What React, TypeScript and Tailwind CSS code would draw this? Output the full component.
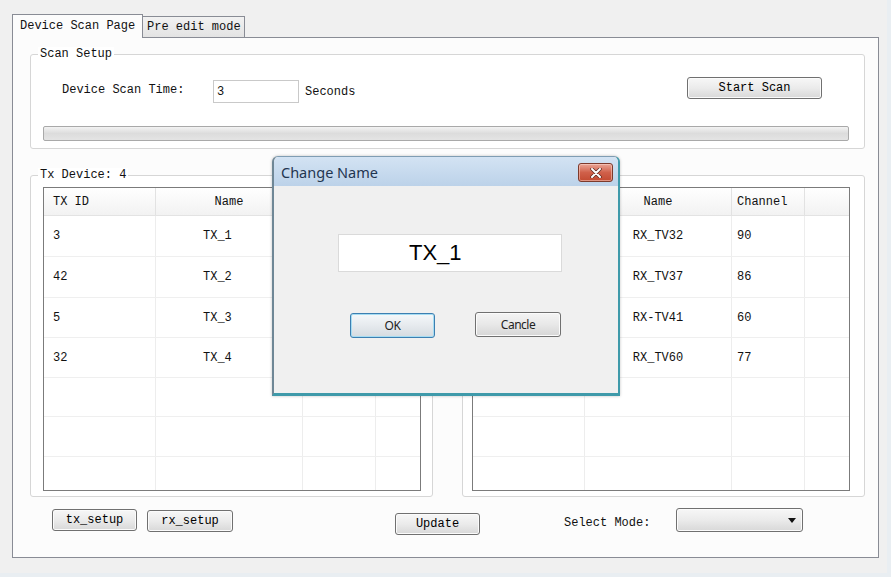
import React from "react";

const btn =
  "flex items-center justify-center rounded-[3px] border border-[#707070] bg-linear-to-b from-[#f7f7f7] via-[#ebebeb] to-[#d8d8d8] shadow-[inset_0_0_0_1px_#fbfbfb] text-[12px] leading-none text-black";

const rowHeights = [41, 41, 40, 40, 39, 40, 40];

function DataTable({
  kind,
  headers,
  rows,
}: {
  kind: "tx" | "rx";
  headers: string[];
  rows: string[][];
}) {
  const allRows: string[][] = [...rows];
  while (allRows.length < rowHeights.length) allRows.push(["", "", "", ""]);
  return (
    <div
      className={
        kind === "tx"
          ? "ml-[12px] mt-[11px] h-[304px] w-[378px] overflow-hidden border border-[#7b7b7b] bg-white"
          : "ml-[9px] mt-[11px] h-[304px] w-[378px] overflow-hidden border border-[#7b7b7b] bg-white"
      }
    >
      <div className="flex h-[28px] border-b border-[#e3e3e3] bg-linear-to-b from-white to-[#f2f2f2]">
        <div className="flex w-[112px] items-center border-r border-[#e2e2e2] pl-[9px]">{headers[0]}</div>
        <div className="flex w-[147px] items-center justify-center border-r border-[#e2e2e2]">{headers[1]}</div>
        <div className="flex w-[73px] items-center border-r border-[#e2e2e2] pl-[5px]">{headers[2]}</div>
        <div className="flex-1" />
      </div>
      {allRows.map((r, i) => (
        <div
          key={i}
          className="flex border-b border-[#efefef]"
          style={{ height: rowHeights[i] }}
        >
          <div className="flex w-[112px] items-center border-r border-[#ededed] pl-[9px]">{r[0]}</div>
          {kind === "tx" ? (
            <div className="flex w-[147px] items-center border-r border-[#ededed] pl-[47px]">{r[1]}</div>
          ) : (
            <div className="flex w-[147px] items-center justify-center border-r border-[#ededed]">{r[1]}</div>
          )}
          <div className="flex w-[73px] items-center border-r border-[#ededed] pl-[5px]">{r[2]}</div>
          <div className="flex-1" />
        </div>
      ))}
    </div>
  );
}

function GroupBox({ label, children }: { label: string; children: React.ReactNode }) {
  return (
    <div className="relative h-[322px] w-[403px] rounded-[3px] border border-[#d6d6d6] bg-white">
      <div className="absolute -top-[8px] left-[7px] bg-white px-[2px] text-[12px] leading-[14px]">{label}</div>
      {children}
    </div>
  );
}

export default function App() {
  return (
    <div className="relative h-[577px] w-[891px] overflow-hidden border-r-[4px] border-b-[4px] border-[#e9eef2] bg-[#f0f0f0] pl-[12px] pt-[14px] font-['Liberation_Mono',monospace] text-[12px] text-[#111]">
      {/* Tabs */}
      <div className="flex h-[23px] items-end">
        <div className="relative z-10 -mb-[1px] h-[24px] w-[131px] border border-b-0 border-[#898c95] bg-[#fcfcfc] pl-[7px] pt-[4px] leading-[14px]">
          Device Scan Page
        </div>
        <div className="h-[21px] w-[102px] border border-b-0 border-l-0 border-[#898c95] bg-linear-to-b from-[#f2f2f2] to-[#e3e3e3] pl-[4px] pt-[3px] leading-[14px]">
          Pre edit mode
        </div>
      </div>

      {/* Tab panel */}
      <div className="flex h-[521px] w-[867px] flex-col border border-[#898c95] bg-[#fcfcfc] pl-[17px] pt-[16px]">
        {/* Scan Setup */}
        <div className="relative h-[95px] w-[835px] rounded-[3px] border border-[#d6d6d6] bg-white pt-[22px]">
          <div className="absolute -top-[8px] left-[7px] bg-white px-[2px] leading-[14px]">Scan Setup</div>
          <div className="flex h-[26px] items-start">
            <div className="ml-[31px] mt-[6px] w-[151px] leading-[14px]">Device Scan Time:</div>
            <div className="mt-[3px] flex h-[23px] w-[86px] items-center border border-[#c9c9c9] bg-white pl-[3px]">3</div>
            <div className="ml-[6px] mt-[8px] leading-[14px]">Seconds</div>
            <div className={`${btn} ml-auto mr-[42px] h-[22px] w-[135px]`}>Start Scan</div>
          </div>
          <div className="ml-[12px] mr-[15px] mt-[23px] h-[15px] rounded-[2px] border border-[#a9a9a9] bg-linear-to-b from-[#f3f3f3] via-[#dcdcdc] to-[#e4e4e4]" />
        </div>

        {/* Device groups */}
        <div className="mt-[26px] flex gap-[29px]">
          <GroupBox label="Tx Device: 4">
            <DataTable
              kind="tx"
              headers={["TX ID", "Name", "Channel"]}
              rows={[
                ["3", "TX_1", ""],
                ["42", "TX_2", ""],
                ["5", "TX_3", ""],
                ["32", "TX_4", ""],
              ]}
            />
          </GroupBox>
          <GroupBox label="Rx Device: 4">
            <DataTable
              kind="rx"
              headers={["RX ID", "Name", "Channel"]}
              rows={[
                ["32", "RX_TV32", "90"],
                ["37", "RX_TV37", "86"],
                ["41", "RX-TV41", "60"],
                ["60", "RX_TV60", "77"],
              ]}
            />
          </GroupBox>
        </div>

        {/* Bottom controls */}
        <div className="mt-[11px] flex items-start">
          <div className={`${btn} ml-[22px] mt-[1px] h-[22px] w-[85px]`}>tx_setup</div>
          <div className={`${btn} ml-[10px] mt-[2px] h-[22px] w-[86px]`}>rx_setup</div>
          <div className={`${btn} ml-[162px] mt-[5px] h-[22px] w-[85px]`}>Update</div>
          <div className="ml-[84px] mt-[8px] leading-[14px]">Select Mode:</div>
          <div className={`${btn} ml-[26px] h-[24px] w-[127px] justify-end pr-[6px]`}>
            <svg width="8" height="5" viewBox="0 0 8 5">
              <polygon points="0,0 8,0 4,5" fill="#111" />
            </svg>
          </div>
        </div>
      </div>

      {/* Change Name dialog */}
      <div className="absolute left-[272px] top-[156px] flex h-[240px] w-[348px] flex-col rounded-t-[6px] border-t border-r-[2px] border-b-[3px] border-l-[2px] border-t-[#7f9db3] border-r-[#3f9aaa] border-b-[#3f9aaa] border-l-[#6f8796] bg-[#f0f0f0] shadow-[0_0_3px_rgba(0,0,0,0.25)]">
        <div className="flex h-[29px] items-start justify-between rounded-t-[5px] bg-linear-to-b from-[#d3e3f3] to-[#bcd2e9]">
          <div className="ml-[7px] mt-[6px] font-['Noto_Sans',sans-serif] text-[14.5px] leading-[18px] text-[#1f3550]">
            Change Name
          </div>
          <div className="mr-[5px] mt-[6px] flex h-[19px] w-[35px] items-center justify-center rounded-[3px] border border-[#7d3a2c] bg-linear-to-b from-[#e9a596] via-[#d0604a] to-[#c24a31] shadow-[inset_0_0_0_1px_rgba(255,220,210,0.5)]">
            <svg width="12" height="10" viewBox="0 0 12 10">
              <path d="M2 1 L10 9 M10 1 L2 9" stroke="#5a2a22" strokeWidth="3.4" strokeLinecap="round" />
              <path d="M2 1 L10 9 M10 1 L2 9" stroke="#ffffff" strokeWidth="2" strokeLinecap="round" />
            </svg>
          </div>
        </div>
        <div className="flex flex-1 flex-col">
          <div className="ml-[64px] mt-[48px] flex h-[38px] w-[224px] items-center border border-[#dadada] bg-white pl-[70px] font-['Liberation_Sans',sans-serif] text-[22px] leading-none text-black">
            TX_1
          </div>
          <div className="mt-[40px] flex items-start font-['Noto_Sans',sans-serif]">
            <div className="ml-[76px] mt-[1px] flex h-[25px] w-[85px] items-center justify-center rounded-[3px] border border-[#3c7fb1] bg-linear-to-b from-[#f5f8fa] via-[#e6eaee] to-[#d5dbe0] text-[12px] tracking-[-0.5px] text-[#222] shadow-[inset_0_0_0_1px_#a6dcf2]">
              OK
            </div>
            <div className="ml-[40px] flex h-[25px] w-[86px] items-center justify-center rounded-[3px] border border-[#707070] bg-linear-to-b from-[#f4f4f4] via-[#e8e8e8] to-[#d6d6d6] text-[12px] tracking-[-0.5px] text-[#222] shadow-[inset_0_0_0_1px_#fbfbfb]">
              Cancle
            </div>
          </div>
        </div>
      </div>
    </div>
  );
}
